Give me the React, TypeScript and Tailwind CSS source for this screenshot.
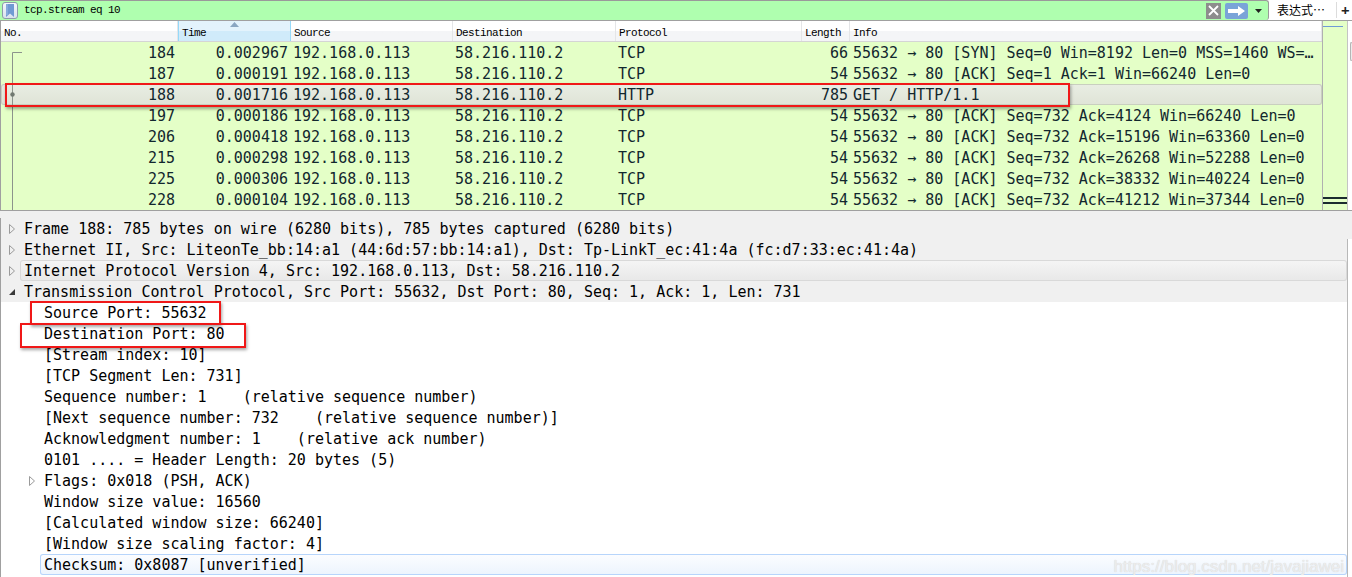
import React from "react"

const PACKETS = [
    { no: 184, time: '0.002967', proto: 'TCP', len: 66, info: '55632 → 80 [SYN] Seq=0 Win=8192 Len=0 MSS=1460 WS=…' },
    { no: 187, time: '0.000191', proto: 'TCP', len: 54, info: '55632 → 80 [ACK] Seq=1 Ack=1 Win=66240 Len=0' },
    { no: 188, time: '0.001716', proto: 'HTTP', len: 785, info: 'GET / HTTP/1.1' },
    { no: 197, time: '0.000186', proto: 'TCP', len: 54, info: '55632 → 80 [ACK] Seq=732 Ack=4124 Win=66240 Len=0' },
    { no: 206, time: '0.000418', proto: 'TCP', len: 54, info: '55632 → 80 [ACK] Seq=732 Ack=15196 Win=63360 Len=0' },
    { no: 215, time: '0.000298', proto: 'TCP', len: 54, info: '55632 → 80 [ACK] Seq=732 Ack=26268 Win=52288 Len=0' },
    { no: 225, time: '0.000306', proto: 'TCP', len: 54, info: '55632 → 80 [ACK] Seq=732 Ack=38332 Win=40224 Len=0' },
    { no: 228, time: '0.000104', proto: 'TCP', len: 54, info: '55632 → 80 [ACK] Seq=732 Ack=41212 Win=37344 Len=0' },
]

type Detail = { text: string; level: number; toggle?: 'open' | 'closed'; state?: 'hover' | 'selected' }

const DETAILS: Detail[] = [
    { text: 'Frame 188: 785 bytes on wire (6280 bits), 785 bytes captured (6280 bits)', level: 0, toggle: 'closed' },
    { text: 'Ethernet II, Src: LiteonTe_bb:14:a1 (44:6d:57:bb:14:a1), Dst: Tp-LinkT_ec:41:4a (fc:d7:33:ec:41:4a)', level: 0, toggle: 'closed' },
    { text: 'Internet Protocol Version 4, Src: 192.168.0.113, Dst: 58.216.110.2', level: 0, toggle: 'closed', state: 'hover' },
    { text: 'Transmission Control Protocol, Src Port: 55632, Dst Port: 80, Seq: 1, Ack: 1, Len: 731', level: 0, toggle: 'open' },
    { text: 'Source Port: 55632', level: 1 },
    { text: 'Destination Port: 80', level: 1 },
    { text: '[Stream index: 10]', level: 1 },
    { text: '[TCP Segment Len: 731]', level: 1 },
    { text: 'Sequence number: 1    (relative sequence number)', level: 1 },
    { text: '[Next sequence number: 732    (relative sequence number)]', level: 1 },
    { text: 'Acknowledgment number: 1    (relative ack number)', level: 1 },
    { text: '0101 .... = Header Length: 20 bytes (5)', level: 1 },
    { text: 'Flags: 0x018 (PSH, ACK)', level: 1, toggle: 'closed' },
    { text: 'Window size value: 16560', level: 1 },
    { text: '[Calculated window size: 66240]', level: 1 },
    { text: '[Window size scaling factor: 4]', level: 1 },
    { text: 'Checksum: 0x8087 [unverified]', level: 1, state: 'selected' },
]

const MONO = "font-['DejaVu_Sans_Mono',monospace] text-[15px]"
const HEAD = "font-['Liberation_Mono',monospace] text-[11px] tracking-[-0.6px] text-black"

function Toolbar() {
    return (
        <div className="h-[21px] flex items-stretch bg-white border-b border-[#a0a0a0]">
            <div className="w-[1269px] shrink-0 flex items-center bg-[#afffaf] border-t border-r border-[#9a9a9a] rounded-tr-[3px] rounded-br-[3px]">
                {/* bookmark button */}
                <div className="ml-[2px] w-[16px] h-[17px] rounded-[3px] border border-[#8e9bab] bg-linear-to-b from-[#f4f7fb] to-[#d9e2ee] flex items-center justify-center">
                    <svg width="8" height="13" viewBox="0 0 8 13">
                        <path d="M0 0 H8 V13 L4 9.5 L0 13 Z" fill="#6f9ad3" />
                        <path d="M1 0 V11" stroke="#9dbbe4" strokeWidth="1" />
                    </svg>
                </div>
                <span className={`${HEAD} ml-[6px] text-[#111]`}>tcp.stream eq 10</span>
                <div className="flex-1" />
                {/* clear */}
                <div className="w-[15px] h-[16px] bg-[#8d8d8d] flex items-center justify-center">
                    <svg width="11" height="11" viewBox="0 0 11 11">
                        <path d="M1 1 L10 10 M10 1 L1 10" stroke="white" strokeWidth="1.8" />
                    </svg>
                </div>
                {/* apply */}
                <div className="ml-[4px] w-[23px] h-[16px] rounded-[2px] bg-[#7aa4d8] flex items-center justify-center">
                    <svg width="17" height="10" viewBox="0 0 17 10">
                        <path d="M0 3 H10 V0 L17 5 L10 10 V7 H0 Z" fill="white" />
                    </svg>
                </div>
                {/* dropdown */}
                <div className="w-[20px] flex items-center justify-center">
                    <svg width="7" height="4" viewBox="0 0 7 4">
                        <path d="M0 0 H7 L3.5 4 Z" fill="#222" />
                    </svg>
                </div>
            </div>
            <div className="ml-[8px] flex items-center whitespace-nowrap font-['Noto_Sans_CJK_SC',sans-serif] text-[12px] leading-none text-black">
                表达式…
            </div>
            <div className="ml-[11px] w-px shrink-0 bg-[#dcdcdc] my-[2px]" />
            <div className="ml-[4px] flex items-center text-[15px] font-bold leading-none text-[#222]">+</div>
        </div>
    )
}

function HeaderCell({ label, w, active }: { label: string; w: string; active?: boolean }) {
    return (
        <div
            className={`${w} relative h-full flex items-center pl-[3px] border-r ${active
                ? 'border-[#96d9f9] border-l bg-linear-to-b from-[#e3f3fc] from-50% to-[#d0ebfa] to-50%'
                : 'border-[#e4e5e7]'}`}
        >
            {active && (
                <svg className="absolute top-[1px] left-[51px]" width="9" height="5" viewBox="0 0 9 5">
                    <path d="M0 5 L4.5 0 L9 5 Z" fill="#8aa6c1" />
                </svg>
            )}
            <span className={`${HEAD} mt-[5px]`}>{label}</span>
        </div>
    )
}

function PacketList() {
    return (
        <div className="h-[190px] flex border-b border-[#a0a0a0]">
            <div className="w-[1322px] flex flex-col border-l border-[#a0a0a0]">
                <div className="h-[21px] flex border-b border-[#d5d5d5] bg-linear-to-b from-white from-50% to-[#f4f5f7] to-50%">
                    <HeaderCell label="No." w="w-[177px]" />
                    <HeaderCell label="Time" w="w-[113px]" active />
                    <HeaderCell label="Source" w="w-[162px]" />
                    <HeaderCell label="Destination" w="w-[163px]" />
                    <HeaderCell label="Protocol" w="w-[186px]" />
                    <HeaderCell label="Length" w="w-[48px]" />
                    <HeaderCell label="Info" w="flex-1" />
                </div>
                <div className={`relative flex-1 bg-[#e4ffc7] text-[#12272e] ${MONO}`}>
                    {/* conversation tree line */}
                    <svg className="absolute left-0 top-0" width="24" height="168" viewBox="0 0 24 168">
                        <path d="M11.5 10.5 V168 M11.5 10.5 H21" stroke="#8c948c" strokeWidth="1" fill="none" />
                        <circle cx="11.5" cy="52.5" r="2.2" fill="#707870" />
                    </svg>
                    {PACKETS.map((p) => (
                        <div
                            key={p.no}
                            className={`h-[21px] flex items-center pt-[2px] whitespace-pre ${p.no === 188
                                ? 'rounded-[3px] bg-linear-to-b from-[#e9ede3] to-[#dfe4d7] shadow-[inset_0_0_0_1px_#c9cfbf]'
                                : ''}`}
                        >
                            <div className="w-[177px] text-right pr-[3px]">{p.no}</div>
                            <div className="w-[113px] text-right pr-[3px]">{p.time}</div>
                            <div className="w-[162px] pl-[2px]">192.168.0.113</div>
                            <div className="w-[163px] pl-[2px]">58.216.110.2</div>
                            <div className="w-[186px] pl-[2px]">{p.proto}</div>
                            <div className="w-[48px] text-right pr-[2px]">{p.len}</div>
                            <div className="flex-1 pl-[3px] overflow-hidden">{p.info}</div>
                        </div>
                    ))}
                    {/* annotation */}
                    <div className="absolute left-[4px] top-[41px] w-[1065px] h-[24px] border-2 border-[#f01818] shadow-[1px_2px_3px_rgba(0,0,0,0.35)]" />
                </div>
            </div>
            {/* minimap */}
            <div className="w-[25px] bg-[#e4ffc7] border-l border-[#b0b0b0] flex flex-col">
                <div className="h-[5px]" />
                <div className="h-px bg-[#6f9ad6] mr-[4px]" />
                <div className="flex-1" />
                <div className="h-[2px] bg-[#1b2c2f]" />
                <div className="h-[3px]" />
                <div className="h-[2px] bg-[#1b2c2f]" />
                <div className="h-[6px]" />
            </div>
            {/* scrollbar */}
            <div className="flex-1 bg-white border-l border-[#c4c4c4] flex flex-col">
                <div className="h-[21px]" />
                <div className="h-[19px] ml-[2px] rounded-l-[3px] border border-r-0 border-[#b5b5b5] bg-[#ececec]" />
            </div>
        </div>
    )
}

function Toggle({ kind }: { kind: 'open' | 'closed' }) {
    if (kind === 'open') {
        return (
            <svg width="6" height="6" viewBox="0 0 6 6">
                <path d="M6 0 V6 H0 Z" fill="#3a3a3a" />
            </svg>
        )
    }
    return (
        <svg width="6" height="10" viewBox="0 0 6 10">
            <path d="M0.5 0.5 L5.5 5 L0.5 9.5 Z" fill="none" stroke="#9a9a9a" strokeWidth="1" />
        </svg>
    )
}

function DetailRow({ d }: { d: Detail }) {
    const indent = d.level === 0 ? 'pl-[3px]' : 'pl-[23px]'
    let box = ''
    if (d.state === 'hover') box = 'rounded-[3px] bg-linear-to-b from-[#f5f5f5] to-[#e8e8e8] shadow-[inset_0_0_0_1px_#d9d9d9]'
    if (d.state === 'selected') box = 'rounded-[3px] bg-linear-to-b from-[#fcfdff] to-[#ecf4fd] shadow-[inset_0_0_0_1px_#b7d5fb]'
    return (
        <div className={`h-[21px] flex items-center ${d.level === 0 ? 'bg-[#f0f0f0]' : 'bg-white'} ${indent}`}>
            <div className="w-[16px] flex items-center justify-center">
                {d.toggle && <Toggle kind={d.toggle} />}
            </div>
            <div className={`flex-1 h-full flex items-center pt-[2px] pl-[4px] whitespace-pre text-black ${box}`}>
                {d.text}
            </div>
        </div>
    )
}

export default function App() {
    return (
        <div className="w-[1352px] h-[577px] overflow-hidden bg-white flex flex-col">
            <Toolbar />
            <PacketList />
            {/* splitter */}
            <div className="h-[7px] bg-[#f0f0f0]" />
            <div className="flex-1 flex overflow-hidden">
                <div className={`relative w-[1347px] flex flex-col border-l border-[#a0a0a0] ${MONO}`}>
                    {DETAILS.map((d, i) => (
                        <DetailRow key={i} d={d} />
                    ))}
                    {/* annotations */}
                    <div className="absolute left-[29px] top-[83px] w-[191px] h-[24px] border-2 border-[#f01818] shadow-[1px_2px_3px_rgba(0,0,0,0.35)]" />
                    <div className="absolute left-[19px] top-[105px] w-[226px] h-[25px] border-2 border-[#f01818] shadow-[1px_2px_3px_rgba(0,0,0,0.35)]" />
                    {/* watermark */}
                    <div className="absolute right-[3px] bottom-[2px] font-['Liberation_Sans',sans-serif] text-[17px] leading-none text-[#ececec] [text-shadow:0_0_1px_#cfcfcf]">
                        https://blog.csdn.net/javajiawei
                    </div>
                </div>
                <div className="flex-1 flex flex-col">
                    <div className="h-[21px] bg-[#f0f0f0]" />
                    <div className="flex-1 bg-white border-l border-[#b8b8b8]" />
                </div>
            </div>
        </div>
    )
}
